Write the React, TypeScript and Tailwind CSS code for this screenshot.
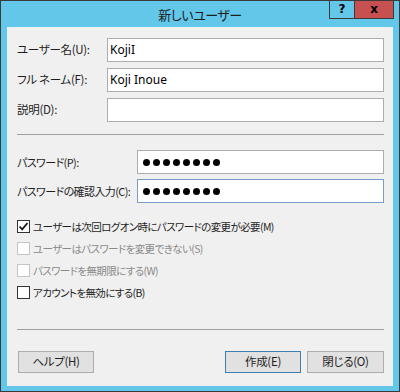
import React from 'react';

const jp = "font-['Meiryo_UI','Noto_Sans_CJK_JP',sans-serif] [font-feature-settings:'palt']";

interface FieldProps {
  label: string;
  value?: string;
}

const TextField: React.FC<FieldProps> = ({ label, value }) => (
  <div className="flex items-center h-[24px]">
    <div className="w-[90px] shrink-0 whitespace-nowrap text-[11.5px] tracking-[-0.3px] text-[#1e1e1e]">{label}</div>
    <div className="flex-1 h-[24px] bg-white border border-[#abadb3] flex items-center pl-[2px] font-['Noto_Sans',sans-serif] text-[12px] text-black">
      {value}
    </div>
  </div>
);

const PasswordField: React.FC<{ label: string; focused?: boolean }> = ({ label, focused }) => (
  <div className="flex items-center h-[24px]">
    <div className="w-[120px] shrink-0 whitespace-nowrap text-[11px] tracking-[-0.6px] text-[#1e1e1e]">{label}</div>
    <div
      className={`flex-1 h-[24px] bg-white border flex items-center gap-[3px] pl-[5px] ${
        focused ? 'border-[#7a9cc4]' : 'border-[#abadb3]'
      }`}
    >
      {Array.from({ length: 8 }).map((_, i) => (
        <span key={i} className="w-[7px] h-[7px] rounded-full bg-black" />
      ))}
    </div>
  </div>
);

const CheckRow: React.FC<{ label: string; checked?: boolean; disabled?: boolean }> = ({
  label,
  checked,
  disabled,
}) => (
  <div className="flex items-center h-[21px]">
    <div
      className={`w-[13px] h-[13px] shrink-0 bg-white border flex items-center justify-center ${
        disabled ? 'border-[#c4c4c4]' : 'border-[#333333]'
      }`}
    >
      {checked && (
        <svg width="11" height="11" viewBox="0 0 11 11">
          <path d="M1.5 5.5 L4.2 8.3 L9.5 2" fill="none" stroke="#1a1a1a" strokeWidth="1.8" />
        </svg>
      )}
    </div>
    <span
      className={`ml-[3px] whitespace-nowrap text-[10.5px] tracking-[-0.6px] ${
        disabled ? 'text-[#8a8a8a]' : 'text-[#1e1e1e]'
      }`}
    >
      {label}
    </span>
  </div>
);

const Button: React.FC<{ label: string; primary?: boolean }> = ({ label, primary }) => (
  <div
    className={`h-[22px] flex items-center justify-center whitespace-nowrap text-[11.5px] tracking-[-0.3px] text-[#1e1e1e] bg-[#e1e1e1] border ${
      primary ? 'border-[#3c7fb1]' : 'border-[#adadad]'
    }`}
  >
    {label}
  </div>
);

export default function App() {
  return (
    <div className={`w-[400px] h-[392px] bg-[#63c7ea] border border-[#3a3a3a] flex flex-col overflow-hidden ${jp}`}>
      {/* title bar */}
      <div className="relative h-[26px] shrink-0 flex items-center justify-center">
        <span className="text-[13px] tracking-[-0.5px] text-[#1e1e1e] pt-[2px]">新しいユーザー</span>
        <div className="absolute top-[-1px] right-[5px] flex h-[19px]">
          <div className="w-[25px] border-l border-b border-[#3a3a3a] flex items-center justify-center font-['DejaVu_Sans',sans-serif] font-black text-[12px] text-black">
            ?
          </div>
          <div className="w-[40px] bg-[#c75050] border-l border-b border-r border-[#3a3a3a] flex items-center justify-center font-['DejaVu_Sans',sans-serif] font-black text-[12px] text-black">
            x
          </div>
        </div>
      </div>

      {/* dialog body */}
      <div className="flex-1 min-h-0 mx-[6px] mb-[5px] bg-[#f0f0f0] flex flex-col pl-[10px] pr-[9px] pt-[11px]">
        <div className="flex flex-col gap-[6px]">
          <TextField label="ユーザー名(U):" value="KojiI" />
          <TextField label="フル ネーム(F):" value="Koji Inoue" />
          <TextField label="説明(D):" />
        </div>

        <div className="h-px shrink-0 bg-[#a0a0a0] mt-[12px]" />

        <div className="flex flex-col gap-[5px] mt-[15px]">
          <PasswordField label="パスワード(P):" />
          <PasswordField label="パスワードの確認入力(C):" focused />
        </div>

        <div className="flex flex-col mt-[13px] gap-[1px]">
          <CheckRow label="ユーザーは次回ログオン時にパスワードの変更が必要(M)" checked />
          <CheckRow label="ユーザーはパスワードを変更できない(S)" disabled />
          <CheckRow label="パスワードを無期限にする(W)" disabled />
          <CheckRow label="アカウントを無効にする(B)" />
        </div>

        <div className="h-px shrink-0 bg-[#a0a0a0] mt-[26px]" />

        <div className="flex items-center mt-[21px]">
          <div className="w-[76px] ml-[1px]">
            <Button label="ヘルプ(H)" />
          </div>
          <div className="flex-1" />
          <div className="w-[76px]">
            <Button label="作成(E)" primary />
          </div>
          <div className="w-[77px] ml-[6px]">
            <Button label="閉じる(O)" />
          </div>
        </div>
      </div>
    </div>
  );
}
